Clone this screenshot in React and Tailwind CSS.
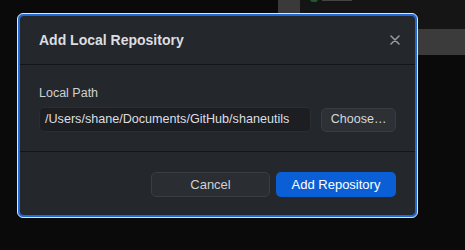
export default function App() {
  return (
    <div className="relative w-[465px] h-[250px] bg-[#0a0a0a] overflow-hidden" style={{ fontFamily: '"Liberation Sans", Arial, sans-serif' }}>
      <div className="absolute left-[278px] top-0 w-[22px] h-[13px] bg-[#3a3a3a]" />
      <div className="absolute left-[300px] top-0 w-[165px] h-[29px] bg-[#151515]">
        <div className="ml-[10px] -mt-[4px] flex items-center gap-1">
          <div className="w-[8px] h-[6px] rounded-sm bg-[#1f5a33]" />
          <div className="w-[30px] h-[3px] bg-[#444]" />
        </div>
      </div>
      <div className="absolute left-[418px] top-[29px] w-[47px] h-[26px] bg-[#3b3b3b]" />
      <div className="absolute left-[17px] top-[13px] w-[401px] h-[205px] rounded-[6px] border border-[#dbe6f7] bg-[#1f6ad8] p-[2px]">
        <div className="w-full h-full rounded-[4px] bg-[#24272b] flex flex-col text-[#d6d8db]">
          <div className="h-[49px] border-b border-[#131517] flex items-center justify-between pl-[19px] pr-[13px] pt-[1px] shrink-0">
            <span className="text-[14px] font-bold text-[#dcdee1]">Add Local Repository</span>
            <svg width="10" height="10" viewBox="0 0 10 10" className="mr-[2px] mt-[-2px]">
              <path d="M1 1L9 9M9 1L1 9" stroke="#9a9ea3" strokeWidth="1.5" strokeLinecap="round" />
            </svg>
          </div>
          <div className="h-[87px] border-b border-[#131517] pl-[19px] pr-[19px] pt-[20px] shrink-0">
            <div className="text-[12.5px] leading-[16px] text-[#cfd1d4]">Local Path</div>
            <div className="mt-[6px] flex items-center gap-[10px]">
              <div className="w-[273px] h-[25px] rounded-[5px] bg-[#1c1e21] border border-[#2a2d31] flex items-center pl-[5px] text-[12.6px] text-[#dcdee1]">/Users/shane/Documents/GitHub/shaneutils</div>
              <div className="w-[75px] h-[24px] rounded-[5px] bg-[#2d3034] border border-[#393c41] flex items-center justify-center text-[12.5px] text-[#d6d8db]">Choose…</div>
            </div>
          </div>
          <div className="flex-1 flex justify-end items-start pt-[20px] pr-[19px] gap-[6px]">
            <div className="w-[119px] h-[25px] rounded-[5px] bg-[#2a2d31] border border-[#3a3d42] flex items-center justify-center text-[13px] text-[#cfd1d4]">Cancel</div>
            <div className="w-[120px] h-[25px] rounded-[5px] bg-[#0b5fd6] flex items-center justify-center text-[13px] text-white">Add Repository</div>
          </div>
        </div>
      </div>
    </div>
  );
}
